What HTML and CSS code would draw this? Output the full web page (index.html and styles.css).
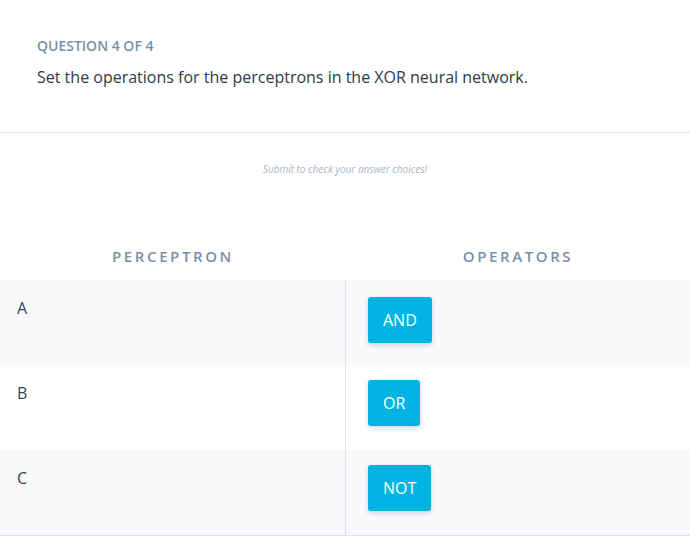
FILE: index.html
```html
<!DOCTYPE html>
<html>
<head>
<meta charset="utf-8">
<link rel="stylesheet" href="styles.css">
</head>
<body>
<div class="question">
  <div class="counter">QUESTION 4 OF 4</div>
  <div class="prompt">Set the operations for the perceptrons in the XOR neural network.</div>
</div>
<div class="hint">Submit to check your answer choices!</div>
<div class="table">
  <div class="head">
    <div class="th">PERCEPTRON</div>
    <div class="th">OPERATORS</div>
  </div>
  <div class="row shade first">
    <div class="cell label">A</div>
    <div class="cell ops"><button class="op">AND</button></div>
  </div>
  <div class="row">
    <div class="cell label">B</div>
    <div class="cell ops"><button class="op">OR</button></div>
  </div>
  <div class="row shade">
    <div class="cell label">C</div>
    <div class="cell ops"><button class="op">NOT</button></div>
  </div>
</div>
</body>
</html>
```
FILE: styles.css
```css
html, body {
  margin: 0;
  padding: 0;
  background: #ffffff;
  font-family: "Open Sans", "Noto Sans", sans-serif;
}
.question {
  padding: 35px 37px 0 37px;
  height: 97px;
  border-bottom: 1px solid #dfe4ea;
}
.counter {
  font-size: 14px;
  font-weight: 600;
  color: #7b8fa6;
  line-height: 22px;
}
.prompt {
  margin-top: 8px;
  font-size: 16px;
  line-height: 24px;
  color: #2e3a48;
}
.hint {
  text-align: center;
  font-style: italic;
  font-size: 10px;
  color: #a9b7c7;
  padding-top: 29px;
  line-height: 14px;
  height: 63px;
}
.table {
  border-bottom: 1px solid #dfe4ea;
}
.head {
  display: grid;
  grid-template-columns: 346px 1fr;
  height: 55px;
  align-items: center;
}
.th {
  text-align: center;
  font-size: 15px;
  font-weight: 600;
  letter-spacing: 2.6px;
  color: #7b8fa6;
  padding-top: 6px;
}
.row {
  display: grid;
  grid-template-columns: 346px 1fr;
  height: 85px;
  background: #ffffff;
}
.row.shade {
  background: #f8f9fb;
}
.cell.label {
  border-right: 1px solid #dfe4ea;
  padding: 17px 0 0 17px;
  font-size: 16px;
  line-height: 22px;
  color: #3a4552;
}
.cell.ops {
  padding: 15px 0 0 22px;
}
.row.first .cell.ops {
  padding-top: 17px;
}
.op {
  font-family: "Open Sans", "Noto Sans", sans-serif;
  font-size: 16px;
  line-height: 22px;
  padding: 12px 15px;
  margin: 0;
  border: none;
  border-radius: 3px;
  background: #00b3e3;
  color: #ffffff;
  box-shadow: 0 2px 5px rgba(40, 60, 80, 0.22);
}
```
